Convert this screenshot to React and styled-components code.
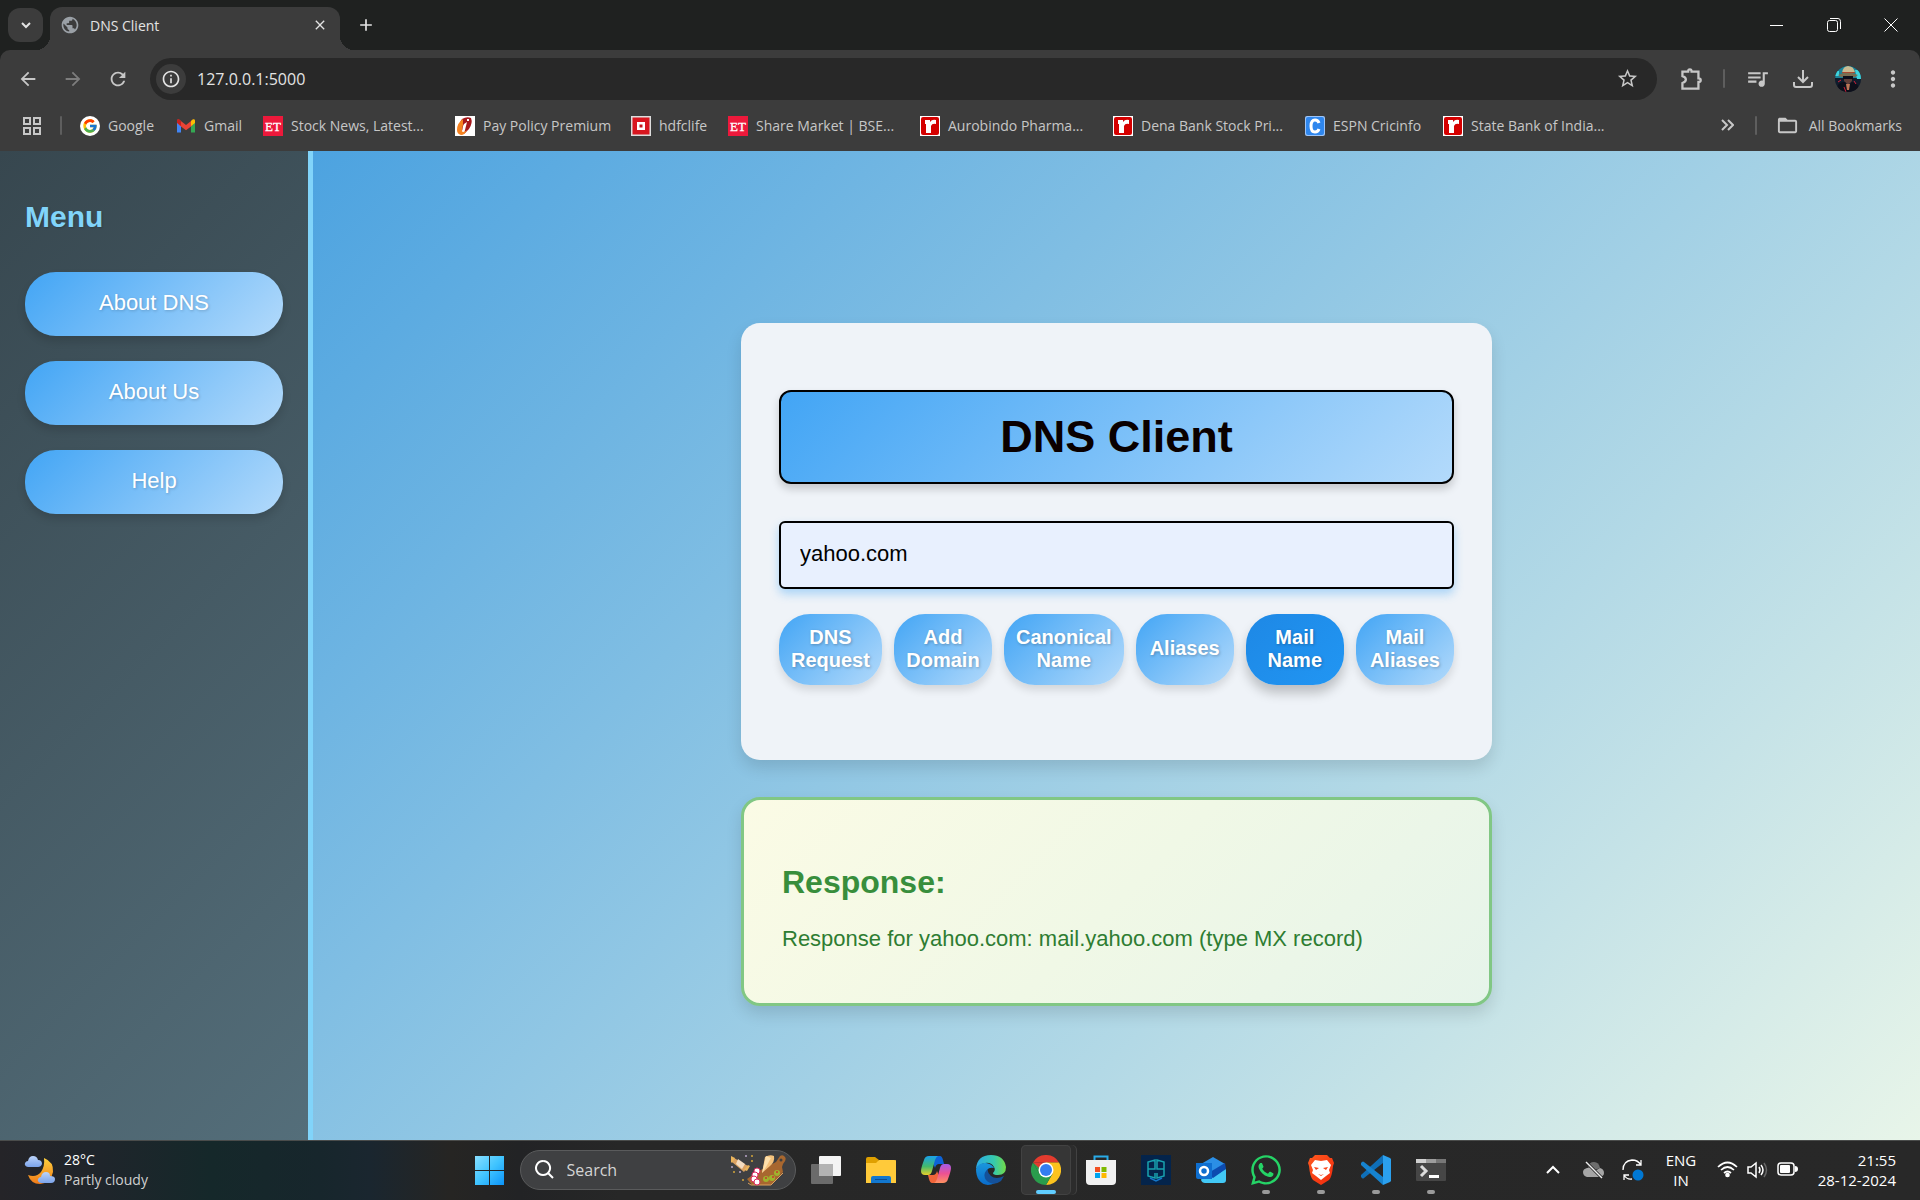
import React from "react";
import styled, { createGlobalStyle, css } from "styled-components";
import {
  MdArrowBack,
  MdArrowForward,
  MdRefresh,
  MdInfoOutline,
  MdStarBorder,
  MdMoreVert,
  MdFolderOpen,
  MdPublic,
  MdQueueMusic,
  MdClose,
  MdAdd,
} from "react-icons/md";
import { FcGoogle } from "react-icons/fc";
import { FaWhatsapp } from "react-icons/fa";

const ui = `"Segoe UI", "Open Sans", "Noto Sans", sans-serif`;
const arial = `Arial, "Liberation Sans", sans-serif`;

const Global = createGlobalStyle`
  *, *::before, *::after { box-sizing: border-box; }
  body { margin: 0; font-family: ${ui}; background: #1f2020; }
  button { border: 0; padding: 0; background: none; color: inherit; font: inherit; cursor: pointer; }
  a { color: inherit; text-decoration: none; }
  svg { display: block; flex: none; }
`;

const Screen = styled.div`
  min-height: 100vh;
  display: flex;
  flex-direction: column;
`;

/* ---------- browser window ---------- */

const TabStrip = styled.header`
  height: 50px;
  display: flex;
  align-items: center;
  padding: 0 1px 0 8px;
  background: #1f2120;
  color: #e3e3e3;
`;

const TabSearch = styled.button`
  width: 35px;
  height: 34px;
  margin-right: 7px;
  border-radius: 12px;
  background: #3c3c3c;
  display: grid;
  place-items: center;
`;

const Tab = styled.div`
  position: relative;
  align-self: flex-end;
  width: 290px;
  height: 43px;
  padding: 0 8px 7px 10px;
  border-radius: 12px 12px 0 0;
  background: #3c3c3c;
  display: flex;
  align-items: center;
  gap: 10px;
  font-size: 14px;
  &::before,
  &::after {
    content: "";
    position: absolute;
    bottom: 0;
    width: 14px;
    height: 14px;
  }
  &::before {
    left: -14px;
    background: radial-gradient(circle at 0 0, transparent 14px, #3c3c3c 14px);
  }
  &::after {
    right: -14px;
    background: radial-gradient(circle at 100% 0, transparent 14px, #3c3c3c 14px);
  }
`;

const TabTitle = styled.span`
  flex: 1;
`;

const SmallButton = styled.button`
  width: 24px;
  height: 24px;
  display: grid;
  place-items: center;
`;

const NewTab = styled(SmallButton)`
  margin-left: 14px;
`;

const WindowControls = styled.div`
  display: flex;
  margin-left: auto;
`;

const WindowButton = styled.button`
  width: 57px;
  height: 50px;
  display: grid;
  place-items: center;
  color: #fff;
`;

const Toolbar = styled.div`
  height: 57px;
  padding: 0 5px;
  display: flex;
  align-items: center;
  background: #3c3c3c;
  border-radius: 10px 10px 0 0;
  color: #c7c7c7;
`;

const ToolbarBack = styled.div`
  background: #1f2120;
`;

const ToolButton = styled.button`
  width: 45px;
  height: 42px;
  display: grid;
  place-items: center;
  color: ${(p) => (p.$dim ? "#7d7d7d" : "#c7c7c7")};
`;

const Omnibox = styled.form`
  flex: 1;
  height: 42px;
  margin: 0 11px 0 10px;
  padding: 0 18px 0 6px;
  border-radius: 21px;
  background: #282828;
  display: flex;
  align-items: center;
  gap: 11px;
`;

const SiteInfo = styled.button`
  width: 30px;
  height: 30px;
  border-radius: 50%;
  background: #3c3c3c;
  display: grid;
  place-items: center;
  color: #e3e3e3;
`;

const Address = styled.input`
  flex: 1;
  min-width: 0;
  border: 0;
  padding: 0;
  outline: 0;
  background: transparent;
  color: #e3e3e3;
  font: 16px/24px ${ui};
`;

const Rule = styled.span`
  width: 2px;
  height: 19px;
  margin: ${(p) => p.$margin};
  border-radius: 1px;
  background: #5e5e5e;
`;

const BookmarkBar = styled.nav`
  height: 44px;
  padding: 0 18px 7px 23px;
  display: flex;
  align-items: center;
  background: #3c3c3c;
  color: #c7c7c7;
  font-size: 14px;
  white-space: nowrap;
`;

const Bookmark = styled.a`
  width: ${(p) => p.$width}px;
  display: flex;
  align-items: center;
  gap: 8px;
`;

const More = styled.button`
  margin-left: auto;
`;

const AllBookmarks = styled.button`
  display: flex;
  align-items: center;
  gap: 10px;
`;

/* ---------- page ---------- */

const Page = styled.div`
  flex: 1;
  display: flex;
  background: linear-gradient(135deg, #3a99df, #e8f5e9);
  font-family: ${arial};
`;

const blue = css`
  background: linear-gradient(135deg, #42a5f5, #b3dafb);
`;

const Sidebar = styled.aside`
  width: 313px;
  padding: 49px 25px;
  border-right: 5px solid #81d4fa;
  background: linear-gradient(135deg, #37474f, #546e7a);
`;

const MenuTitle = styled.h2`
  margin: 0 0 38px;
  color: #81d4fa;
  font-size: 30px;
  line-height: 34px;
  text-shadow: 1px 1px 2px rgba(0, 0, 0, 0.2);
`;

const MenuList = styled.div`
  display: flex;
  flex-direction: column;
  gap: 25px;
`;

const MenuButton = styled.button`
  height: 64px;
  padding-bottom: 2px;
  border-radius: 31px;
  ${blue}
  color: #fff;
  font-size: 22px;
  text-shadow: 1px 1px 3px rgba(0, 0, 0, 0.2);
  box-shadow: 0 5px 8px rgba(0, 0, 0, 0.14);
`;

const Main = styled.main`
  flex: 1;
  padding-top: 38px;
  display: flex;
  flex-direction: column;
  align-items: center;
  justify-content: center;
  gap: 37px;
`;

const Card = styled.section`
  width: 100%;
  max-width: 751px;
  border-radius: 19px;
  box-shadow: 0 8px 16px rgba(0, 0, 0, 0.12);
`;

const ClientCard = styled(Card)`
  padding: 67px 38px 75px;
  background: #eff3f8;
`;

const Title = styled.h1`
  margin: 0 0 37px;
  padding: 19px;
  border: 2px solid #000;
  border-radius: 12px;
  ${blue}
  box-shadow: 0 5px 8px rgba(0, 0, 0, 0.18);
  font-size: 45px;
  line-height: 52px;
  text-align: center;
  color: #0a0000;
`;

const DomainInput = styled.input`
  display: block;
  width: 100%;
  height: 68px;
  margin-bottom: 25px;
  padding: 0 19px 2px;
  border: 2px solid #000;
  border-radius: 6px;
  outline: 0;
  background: #e8f0fe;
  color: #000;
  font: 22px ${arial};
  box-shadow: 0 5px 10px rgba(66, 165, 245, 0.4);
`;

const Actions = styled.div`
  display: flex;
  gap: 12px;
`;

const ActionButton = styled.button`
  flex: 1;
  min-height: 71px;
  padding: 11px 12px 13px;
  border-radius: 31px;
  ${blue}
  ${(p) => p.$active && "background: linear-gradient(135deg, #1e88e5, #2196f3);"}
  color: #fff;
  font-size: 20px;
  font-weight: bold;
  line-height: 23px;
  text-shadow: 1px 1px 3px rgba(0, 0, 0, 0.25);
  box-shadow: ${(p) =>
    p.$active ? "0 8px 12px rgba(0, 0, 0, 0.22)" : "0 5px 8px rgba(0, 0, 0, 0.12)"};
`;

const ResponseCard = styled(Card)`
  padding: 63px 38px 51px;
  border: 3px solid #81c784;
  background: linear-gradient(135deg, #fbfbe5, #f0f8e6 50%, #e6f4ea);
`;

const ResponseTitle = styled.h2`
  margin: 0 0 25px;
  color: #388e3c;
  font-size: 32px;
  line-height: 38px;
`;

const ResponseText = styled.p`
  margin: 0;
  color: #2e7d32;
  font-size: 22px;
  line-height: 26px;
`;

/* ---------- taskbar ---------- */

const Taskbar = styled.footer`
  height: 60px;
  padding-bottom: 2px;
  border-top: 1px solid #4a4c4b;
  display: grid;
  grid-template-columns: 1fr auto 1fr;
  align-items: center;
  color: #fff;
  background: linear-gradient(90deg, #252428 0, #1f252b 100px, #15282a 210px, #17262c 320px, #1a262f 370px, #262523 450px, #222325 520px, #272727 620px, #282828 100%);
`;

const Weather = styled.button`
  justify-self: start;
  margin-left: 24px;
  display: flex;
  align-items: center;
  gap: 8px;
  text-align: left;
  font-size: 14px;
  line-height: 20px;
`;

const Muted = styled.div`
  color: #cfcfcf;
`;

const Dock = styled.div`
  display: flex;
  align-items: center;
  gap: 5px;
`;

const DockButton = styled.button`
  position: relative;
  width: 50px;
  height: 50px;
  border-radius: 5px;
  display: grid;
  place-items: center;
  ${(p) =>
    p.$active &&
    css`
      background: #363636;
      box-shadow: inset 0 0 0 1px #424242, 5px 0 0 #2c2c2c, 6px 0 0 #424242;
    `}
  ${(p) =>
    (p.$running || p.$active) &&
    css`
      &::after {
        content: "";
        position: absolute;
        bottom: 1px;
        width: ${p.$active ? 20 : 8}px;
        height: 4px;
        border-radius: 2px;
        background: ${p.$active ? "#60cdff" : "#9a9a9a"};
      }
    `}
`;

const SearchBox = styled.label`
  width: 276px;
  height: 40px;
  padding: 0 8px 0 14px;
  border: 1px solid #5a5b5c;
  border-radius: 20px;
  background: #3f4042;
  display: flex;
  align-items: center;
  gap: 12px;
`;

const SearchInput = styled.input`
  flex: 1;
  min-width: 0;
  padding: 0;
  border: 0;
  outline: 0;
  background: transparent;
  color: #fff;
  font: 16px ${ui};
  &::placeholder {
    color: #d4d4d4;
    opacity: 1;
  }
`;

const Tray = styled.div`
  justify-self: end;
  padding-right: 24px;
  display: flex;
  align-items: center;
`;

const TrayButton = styled.button`
  width: ${(p) => p.$width}px;
  display: grid;
  place-items: center;
  font-size: 15px;
  line-height: 20px;
`;

const Clock = styled.button`
  width: 90px;
  text-align: right;
  font-size: 15px;
  line-height: 20px;
`;

/* ---------- drawings ---------- */

const Line = ({ d, size = 20, w = 2, box = 20 }) => (
  <svg width={size} height={size} viewBox={`0 0 ${box} ${box}`} fill="none" stroke="currentColor" strokeWidth={w}>
    <path d={d} />
  </svg>
);

const LogoText = styled.text`
  font-family: "Liberation Serif", serif;
  text-anchor: middle;
  fill: #fff;
`;

const Et = () => (
  <svg width="20" height="20" viewBox="0 0 20 20">
    <path fill="#ed193b" d="M0 0h20v20H0z" />
    <LogoText x="10" y="15" fontSize="13" stroke="#fff" strokeWidth=".3">ET</LogoText>
  </svg>
);

const Gmail = () => (
  <svg width="20" height="20" viewBox="0 0 20 20">
    <path fill="#4285f4" d="M1 5.500v11h4V8.500z" />
    <path fill="#34a853" d="M15 8.500v8h4V5.500z" />
    <path fill="#ea4335" d="M1 4.500Q1 3 3 3.500l7 5.500 7-5.500V9l-7 5.200L3 9z" />
    <path fill="#c5221f" d="M1 4.600Q1 3 3 3.300L5 5v5L1 7z" />
    <path fill="#fbbc04" d="M15 5l2-1.700Q19 3 19 4.600V7l-4 3z" />
  </svg>
);

const Google = () => (
  <svg width="20" height="20" viewBox="0 0 20 20">
    <circle cx="10" cy="10" r="10" fill="#fff" />
    <FcGoogle x="2" y="2" size={16} />
  </svg>
);

const Policy = () => (
  <svg width="20" height="20" viewBox="0 0 20 20">
    <path fill="#fff" d="M0 0h20v20H0z" />
    <path fill="#a5181c" d="M7 3Q12 0 16 2q2 5-2 11l-5 5 1-4q-4 1-6-1 0-6 3-10z" />
    <path fill="#f58220" d="M8 3Q2 7 2 14q0 4 4 5 4 0 6-5-2 2-4 2-2-2 0-7z" />
    <path fill="#fff" d="M9 8l3-2-2 8-3 2 1-6zM12 3h2v2h-2z" />
  </svg>
);

const Hdfc = () => (
  <svg width="20" height="20" viewBox="0 0 20 20">
    <path fill="#ddd" d="M0 0h20v20H0z" />
    <path fill="#d8161f" d="M1.500 1.500h17v17h-17z" />
    <path fill="#fff" d="M6 6h8v8H6z" />
    <path fill="#c2151b" d="M8.500 8.500h3v3h-3z" />
  </svg>
);

const Rediff = () => (
  <svg width="20" height="20" viewBox="0 0 20 20">
    <path fill="#fff" d="M0 0h20v20H0z" />
    <rect x="1" y="1" width="18" height="18" rx="2" fill="#d40000" />
    <path fill="#fff" d="M5 4h5v2q2-3 6-2v4q-4-1-5 2v7H6V8H5z" />
  </svg>
);

const Cricinfo = () => (
  <svg width="20" height="20" viewBox="0 0 20 20">
    <rect width="20" height="20" rx="2" fill="#9cc4f8" />
    <rect x="1" y="1" width="18" height="18" rx="2" fill="#2f87ee" />
    <path d="M14 7q-1-3-4-3-4 0-4 6t4 6q3 0 4-3" fill="none" stroke="#fff" strokeWidth="3" />
  </svg>
);

const Avatar = () => (
  <svg width="26" height="26" viewBox="0 0 26 26">
    <clipPath id="face"><circle cx="13" cy="13" r="13" /></clipPath>
    <g clipPath="url(#face)">
      <path fill="#101c2c" d="M0 0h26v26H0z" />
      <path fill="#1c8398" d="M0 0h26v12H0z" />
      <path fill="#3fd4de" d="M20 4h6v9h-4zM0 5h4v5H0z" />
      <path fill="#c9bb92" d="M7 7q1-7 6-7 6 0 7 7z" />
      <path fill="#7a6f52" d="M3 9q10-5 20 0l-3 2H6z" />
      <path fill="#a84a31" d="M7 6h13v1H7z" />
      <path fill="#5f3d38" d="M9 11h8v4l-4 4-4-4z" />
      <path fill="#0d0f1a" d="M1 26q1-11 9-10l3 4 4-4q7 1 8 10zM8 10h10v3H8z" />
      <path fill="#bc7657" d="M11 18h4l-1 6h-2z" />
      <path stroke="#d41f3a" fill="none" d="M3 16l3-2M11 26l-2-5M19 15l2 3" />
    </g>
  </svg>
);

const WeatherArt = () => (
  <svg width="32" height="32" viewBox="0 0 32 32">
    <defs>
      <linearGradient id="moon" x2="0" y2="1"><stop stopColor="#ffd13d" /><stop offset="1" stopColor="#f07a18" /></linearGradient>
      <linearGradient id="cloud" x2="0" y2="1"><stop stopColor="#bcd4fb" /><stop offset="1" stopColor="#7ba3ea" /></linearGradient>
    </defs>
    <path fill="url(#moon)" d="M20 4q10 4 9 14-2 11-13 12Q7 30 4 21q8 3 13-3 4-6 3-14z" />
    <path fill="url(#cloud)" d="M4 13q-4-1-3-4 1-2 3-2 1-5 5-5t5 4q4 0 4 4-1 3-4 3z" />
    <path fill="url(#cloud)" d="M17 29q-4-1-3-4 1-2 3-2 1-5 5-5t4 4q5 0 5 3 0 4-4 4z" />
  </svg>
);

const StartArt = () => (
  <svg width="30" height="30" viewBox="0 0 30 30">
    <defs><linearGradient id="start" gradientUnits="userSpaceOnUse" x1="0" y1="0" x2="30" y2="30"><stop stopColor="#8be0ff" /><stop offset=".5" stopColor="#40c4ff" /><stop offset="1" stopColor="#0a92f8" /></linearGradient></defs>
    <path fill="url(#start)" d="M0 1h14v14H0zM15 1h14v14H15zM0 16h14v14H0zM15 16h14v14H15z" />
  </svg>
);

const BoardArt = () => (
  <svg width="56" height="32" viewBox="0 0 56 32">
    <path d="M26 18L45 8l4-6q3-2 5 1t-2 7l-1 3 1 5-10 11q-1 2-4 2H21l-5-6z" fill="#a8672f" />
    <path d="M17 29l3 2h20l12-12" fill="none" stroke="#dda15e" />
    <circle cx="50" cy="6" r="1.500" fill="#3f4042" />
    <path d="M34 3q5-3 9-1 1 6-4 10l-8 7z" fill="#f4c27c" /><path d="M35 2l5 2-5 9-4 6z" fill="#fde0ac" />
    <path d="M3 4l14 8-4 6L1 8z" fill="#dba263" /><path d="M7 5l7 5-3 5-6-5z" fill="#f3dcc2" /><path d="M0 2l4 2-3 5-2-2zM17 11l2 1-3 5-3-1z" fill="#e9b45c" />
    <g fill="#fff" stroke="#e02962"><circle cx="26" cy="17" r="3" /><circle cx="24" cy="21" r="3" /><circle cx="23" cy="25" r="3" /><circle cx="26" cy="28" r="3" /></g>
    <g fill="#9fb32d"><circle cx="35" cy="25" r="3" /><circle cx="41" cy="24" r="3" /><circle cx="46" cy="19" r="3" /></g>
    <g fill="#c7392c"><circle cx="35" cy="24" r="1" /><circle cx="42" cy="23" r="1" /><circle cx="46" cy="18" r="1" /></g>
    <g fill="#d3a43b"><circle cx="21" cy="2" r="1" /><circle cx="21" cy="7" r="1" /><circle cx="3" cy="18" r="1" /><circle cx="12" cy="26" r="1" /></g>
    <g fill="#b9a5c9"><circle cx="15" cy="2" r="1" /><circle cx="1" cy="13" r="1" /><circle cx="9" cy="18" r="1" /></g>
  </svg>
);

const TaskView = () => (
  <svg width="30" height="30" viewBox="0 0 30 30">
    <rect x="8" y="1" width="22" height="20" rx="1" fill="#f4f4f4" />
    <rect x="0" y="9" width="22" height="20" rx="1" fill="#6b6b6b" />
    <path fill="#b3b3b3" d="M8 9h14v12H8z" />
  </svg>
);

const Explorer = () => (
  <svg width="30" height="30" viewBox="0 0 30 30">
    <path fill="#dfa000" d="M0 4q0-2 2-2h7l4 3-2 4H0z" />
    <path fill="#ffca3a" d="M0 8h10l3-3h15q3 0 3 2v21H0z" />
    <path fill="#1277cf" d="M5 23q0-2 2-2h16q2 0 2 2v5H5z" />
    <path fill="#0b4c93" d="M9 24h12v1H9z" />
  </svg>
);

const Copilot = () => (
  <svg width="30" height="30" viewBox="0 0 30 30">
    <defs>
      <linearGradient id="cp1" x2="0" y2="1"><stop stopColor="#1aa2ec" /><stop offset=".55" stopColor="#43b96b" /><stop offset="1" stopColor="#e8cf2b" /></linearGradient>
      <linearGradient id="cp2" x2="0" y2="1"><stop stopColor="#a35bea" /><stop offset=".5" stopColor="#ec5193" /><stop offset="1" stopColor="#ff9160" /></linearGradient>
    </defs>
    <path fill="#0d63d8" d="M9 1h10q2 0 3 4l1 4h-5q-3 0-4 4z" />
    <path fill="#f1653a" d="M21 28H11q-2 0-3-4l-1-4h5q3 0 4-4z" />
    <path fill="url(#cp1)" d="M8 1h9q-2 1-3 4l-3 11q-1 4-4 4H4q-4 0-4-4 0-3 3-11 1-4 5-4z" />
    <path fill="url(#cp2)" d="M22 28h-9q2-1 3-4l3-11q1-4 4-4h3q4 0 4 4 0 3-3 11-1 4-5 4z" />
  </svg>
);

const Edge = () => (
  <svg width="30" height="30" viewBox="0 0 30 30">
    <defs>
      <linearGradient id="eg1"><stop stopColor="#2aa9e8" /><stop offset=".6" stopColor="#36c9ad" /><stop offset="1" stopColor="#72db47" /></linearGradient>
      <linearGradient id="eg2" x2="0" y2="1"><stop stopColor="#1a97dd" /><stop offset="1" stopColor="#0a6ccb" /></linearGradient>
    </defs>
    <path fill="url(#eg1)" d="M0 14Q1 0 15 0q13 0 15 12 0 8-8 8-5 0-5-2 3-3 1-6-3-5-9-4-6 1-9 6z" />
    <path fill="url(#eg2)" d="M0 14q3-7 10-6 6 1 8 5-5-1-7 2-2 9 8 13-10 5-16-3Q0 21 0 14z" />
    <path fill="#14519a" d="M12 14q-6 5-2 11 7 7 15 1l3-5q-8 4-13 0-4-3-3-7z" />
  </svg>
);

const Chrome = () => (
  <svg width="30" height="30" viewBox="0 0 30 30">
    <path fill="#e33b2e" d="M2 7.500A15 15 0 0 1 28 7.500H15z" />
    <path fill="#fcc31e" d="M28 7.500A15 15 0 0 1 15 30l6.500-11.300L15 7.500z" />
    <path fill="#2a9d4c" d="M15 30A15 15 0 0 1 2 7.500l6.500 11.300L21.500 18.700z" />
    <path fill="#2a9d4c" d="M2 7.500L8.500 18.800 15 15z" />
    <path fill="#e33b2e" d="M2 7.500L8 13 15 7.500z" />
    <circle cx="15" cy="15" r="7.500" fill="#fff" /><circle cx="15" cy="15" r="6" fill="#347df0" />
  </svg>
);

const Store = () => (
  <svg width="30" height="30" viewBox="0 0 30 30">
    <path d="M8.500 6V1.500h13V6" fill="none" stroke="#29abe8" strokeWidth="2" />
    <path d="M0 5h30v21q0 4-4 4H4q-4 0-4-4z" fill="#f1f1f1" />
    <path fill="#f25022" d="M9 12h5v5H9z" /><path fill="#7fba00" d="M15.500 12h5v5h-5z" /><path fill="#00a4ef" d="M9 18h5v5H9z" /><path fill="#ffb900" d="M15.500 18h5v5h-5z" />
  </svg>
);

const Guard = () => (
  <svg width="30" height="30" viewBox="0 0 30 30">
    <path fill="#04244b" d="M0 0h30v30H0z" />
    <g fill="none" strokeWidth="1.500">
      <path stroke="#18a3b0" d="M14 14V5L7 7v7zM16 14V5l7 2v7zM7 14v7l7 2v-5M23 14v7l-7 2v-5" />
      <path stroke="#1577c9" d="M9 23l6 3 6-3" />
    </g>
  </svg>
);

const Outlook = () => (
  <svg width="30" height="30" viewBox="0 0 30 30">
    <path fill="#2b8fe6" d="M5 9l12-7 12 7-3 16H8z" />
    <path fill="#0c4bb0" d="M14 17l15-9 1 6-13 10z" />
    <path fill="#42c8f5" d="M7 21l10 2 13-9v11q0 3-3 3H9q-3 0-4-3z" />
    <path fill="#0f6fd0" d="M0 8h16v16H2q-2 0-2-2z" />
    <circle cx="8" cy="16" r="4" fill="none" stroke="#fff" strokeWidth="2.500" />
  </svg>
);

const Brave = () => (
  <svg width="30" height="30" viewBox="0 0 30 30">
    <defs><linearGradient id="br" x2="1" y2="1"><stop stopColor="#ff5a1f" /><stop offset="1" stopColor="#f1280c" /></linearGradient></defs>
    <path fill="url(#br)" d="M9 0h12l3 3h2l2 5-1 3q-1 11-4 14l-8 5-8-5q-3-3-4-14L2 8l2-5h2z" />
    <path fill="#fff" d="M9 5l6 1 6-1 4 5-2 5 1 3-4 3-5 4-5-4-4-3 1-3-2-5z" />
    <path fill="#f7451c" d="M8 12l5 1-3 2zM22 12l-5 1 3 2zM12 19l3 1 3-1-3 2z" />
  </svg>
);

const Code = () => (
  <svg width="30" height="30" viewBox="0 0 30 30">
    <path fill="#0f6fb8" d="M22 8L3 23q-1 1-2 0l-1-1q-1-1 0-2L22 0z" />
    <path fill="#1683cf" d="M22 22L3 7Q2 6 1 7L0 8q-1 1 0 2l22 20z" />
    <path fill="#2ba0ee" d="M22 0l7 3 1 1v22l-1 1-7 3z" />
  </svg>
);

const Terminal = () => (
  <svg width="30" height="30" viewBox="0 0 30 30">
    <rect y="4" width="30" height="22" rx="1" fill="#464646" />
    <path fill="#d0d0d0" d="M0 4h10v4H0z" /><path fill="#9d9d9d" d="M10 4h10v4H10z" /><path fill="#777" d="M20 4h10v4H20z" />
    <path d="M5 11l5 5-5 5" fill="none" stroke="#dcdcdc" strokeWidth="3" /><path fill="#fff" d="M13 20h10v3H13z" />
  </svg>
);

/* ---------- data ---------- */

const bookmarks = [
  ["Google", Google, 96],
  ["Gmail", Gmail, 87],
  ["Stock News, Latest...", Et, 192],
  ["Pay Policy Premium", Policy, 176],
  ["hdfclife", Hdfc, 97],
  ["Share Market | BSE...", Et, 192],
  ["Aurobindo Pharma...", Rediff, 193],
  ["Dena Bank Stock Pri...", Rediff, 192],
  ["ESPN Cricinfo", Cricinfo, 138],
  ["State Bank of India...", Rediff, 170],
];

const actions = ["DNS Request", "Add Domain", "Canonical Name", "Aliases", "Mail Name", "Mail Aliases"];

const apps = [
  ["Task view", <TaskView />],
  ["File Explorer", <Explorer />],
  ["Copilot", <Copilot />],
  ["Edge", <Edge />],
  ["Chrome", <Chrome />, "active"],
  ["Store", <Store />],
  ["Security", <Guard />],
  ["Outlook", <Outlook />],
  ["WhatsApp", <FaWhatsapp size={34} color="#25d366" />, "running"],
  ["Brave", <Brave />, "running"],
  ["Visual Studio Code", <Code />, "running"],
  ["Terminal", <Terminal />, "running"],
];

export default function App() {
  return (
    <Screen>
      <Global />
      <TabStrip>
        <TabSearch aria-label="Search tabs"><Line d="M2 4l4 4 4-4" size={12} box={12} /></TabSearch>
        <Tab>
          <MdPublic size={20} color="#9aa0a6" />
          <TabTitle>DNS Client</TabTitle>
          <SmallButton aria-label="Close tab"><MdClose size={16} /></SmallButton>
        </Tab>
        <NewTab aria-label="New tab"><MdAdd size={20} /></NewTab>
        <WindowControls>
          <WindowButton aria-label="Minimise"><Line d="M0 6.500h13" size={13} box={13} w={1} /></WindowButton>
          <WindowButton aria-label="Restore">
            <svg width="14" height="14" viewBox="0 0 14 14" fill="none" stroke="currentColor"><rect x=".5" y="2.500" width="10" height="11" rx="2" /><path d="M3 .5h8q2.500 0 2.500 3V11" /></svg>
          </WindowButton>
          <WindowButton aria-label="Close"><Line d="M.5.5l13 13M13.500.5l-13 13" size={14} box={14} w={1} /></WindowButton>
        </WindowControls>
      </TabStrip>

      <ToolbarBack>
        <Toolbar>
          <ToolButton aria-label="Back"><MdArrowBack size={22} /></ToolButton>
          <ToolButton $dim aria-label="Forward"><MdArrowForward size={22} /></ToolButton>
          <ToolButton aria-label="Reload"><MdRefresh size={22} /></ToolButton>
          <Omnibox>
            <SiteInfo type="button" aria-label="Site information"><MdInfoOutline size={20} /></SiteInfo>
            <Address aria-label="Address" defaultValue="127.0.0.1:5000" />
            <SmallButton type="button" aria-label="Bookmark this page"><MdStarBorder size={23} color="#c7c7c7" /></SmallButton>
          </Omnibox>
          <ToolButton aria-label="Extensions">
            <Line d="M3 4h5q0-2 1.500-2T11 4h6v6q2 0 2 1.500T17 13v6H3v-5q3-1 3-3T3 8z" size={24} box={21} w={2} />
          </ToolButton>
          <Rule $margin="0 10px" />
          <ToolButton aria-label="Media"><MdQueueMusic size={25} /></ToolButton>
          <ToolButton aria-label="Downloads"><Line d="M10 1v11M5 8l5 5 5-5M1 13v3q0 2 2 2h14q2 0 2-2v-3" size={20} /></ToolButton>
          <ToolButton aria-label="Profile"><Avatar /></ToolButton>
          <ToolButton aria-label="More"><MdMoreVert size={26} /></ToolButton>
        </Toolbar>
      </ToolbarBack>

      <BookmarkBar>
        <button aria-label="Apps">
          <svg width="18" height="18" viewBox="0 0 18 18" fill="none" stroke="currentColor" strokeWidth="2"><path d="M1 1h6v6H1zM11 1h6v6h-6zM1 11h6v6H1zM11 11h6v6h-6z" /></svg>
        </button>
        <Rule $margin="0 18px 0 19px" />
        {bookmarks.map(([name, Icon, width]) => (
          <Bookmark key={name} href="#" $width={width}><Icon />{name}</Bookmark>
        ))}
        <More aria-label="More bookmarks"><Line d="M1 1l5 5-5 5M7 1l5 5-5 5" size={13} box={13} /></More>
        <Rule $margin="0 19px 0 21px" />
        <AllBookmarks><MdFolderOpen size={23} />All Bookmarks</AllBookmarks>
      </BookmarkBar>

      <Page>
        <Sidebar>
          <MenuTitle>Menu</MenuTitle>
          <MenuList>
            <MenuButton>About DNS</MenuButton>
            <MenuButton>About Us</MenuButton>
            <MenuButton>Help</MenuButton>
          </MenuList>
        </Sidebar>
        <Main>
          <ClientCard>
            <Title>DNS Client</Title>
            <DomainInput aria-label="Domain" defaultValue="yahoo.com" />
            <Actions>
              {actions.map((a) => (
                <ActionButton key={a} $active={a === "Mail Name"}>{a}</ActionButton>
              ))}
            </Actions>
          </ClientCard>
          <ResponseCard>
            <ResponseTitle>Response:</ResponseTitle>
            <ResponseText>Response for yahoo.com: mail.yahoo.com (type MX record)</ResponseText>
          </ResponseCard>
        </Main>
      </Page>

      <Taskbar>
        <Weather>
          <WeatherArt />
          <div>28°C<Muted>Partly cloudy</Muted></div>
        </Weather>
        <Dock>
          <DockButton aria-label="Start"><StartArt /></DockButton>
          <SearchBox>
            <Line d="M13 13l5 5M8 1a7 7 0 1 0 .1 0" />
            <SearchInput aria-label="Search" placeholder="Search" />
            <BoardArt />
          </SearchBox>
          {apps.map(([name, icon, state]) => (
            <DockButton key={name} aria-label={name} $active={state === "active"} $running={state === "running"}>{icon}</DockButton>
          ))}
        </Dock>
        <Tray>
          <TrayButton $width={40} aria-label="Hidden icons"><Line d="M1 10l6-6 6 6" size={14} box={14} /></TrayButton>
          <TrayButton $width={40} aria-label="OneDrive">
            <svg width="21" height="18" viewBox="0 0 21 18"><path fill="#6d6d6d" d="M5 6q1-5 6-5 5 0 6 6l-8 3z" /><path fill="#a6a6a6" d="M4 7q5-1 8 3l5-3q4 1 4 5 0 3-4 4H4q-4-1-4-5 0-3 4-4z" /><path d="M3 1l16 16" stroke="#262626" strokeWidth="3" /><path d="M3 1l16 16" stroke="#eee" strokeWidth="1.500" /></svg>
          </TrayButton>
          <TrayButton $width={40} aria-label="Updates">
            <svg width="22" height="22" viewBox="0 0 22 22" fill="none" stroke="#fff" strokeWidth="1.300"><path d="M1 11q0-9 9-10 6 0 9 5M19 1v5h-5M2 21v-5h5M2 16q3 5 8 4" /><circle cx="16" cy="16" r="5.500" fill="#0078d4" stroke="none" /></svg>
          </TrayButton>
          <TrayButton $width={56}><span>ENG</span><span>IN</span></TrayButton>
          <TrayButton $width={36} aria-label="Wi-Fi">
            <svg width="21" height="17" viewBox="0 0 21 17" fill="none" stroke="#fff" strokeWidth="1.700"><path d="M1 6q9.500-9 19 0M4 9q6.500-6 13 0M7 12q3.500-3 7 0" /><circle cx="10.500" cy="14" r="1.500" fill="#fff" /></svg>
          </TrayButton>
          <TrayButton $width={24} aria-label="Volume">
            <svg width="21" height="18" viewBox="0 0 21 18" fill="none" stroke="#fff" strokeWidth="1.500"><path d="M1 6h3l5-4v14l-5-4H1zM12 6q2 3 0 6M14 4q4 5 0 10" /><path stroke="#666" d="M17 2q5 7 0 14" /></svg>
          </TrayButton>
          <TrayButton $width={37} aria-label="Battery">
            <svg width="21" height="15" viewBox="0 0 21 15"><rect x="1" y="1" width="16" height="12" rx="3" fill="none" stroke="#fff" strokeWidth="1.500" /><rect x="3" y="3" width="10" height="8" rx="1" fill="#fff" /><path fill="#fff" d="M18 4q3 0 3 3t-3 3z" /></svg>
          </TrayButton>
          <Clock>21:55<br />28-12-2024</Clock>
        </Tray>
      </Taskbar>
    </Screen>
  );
}
